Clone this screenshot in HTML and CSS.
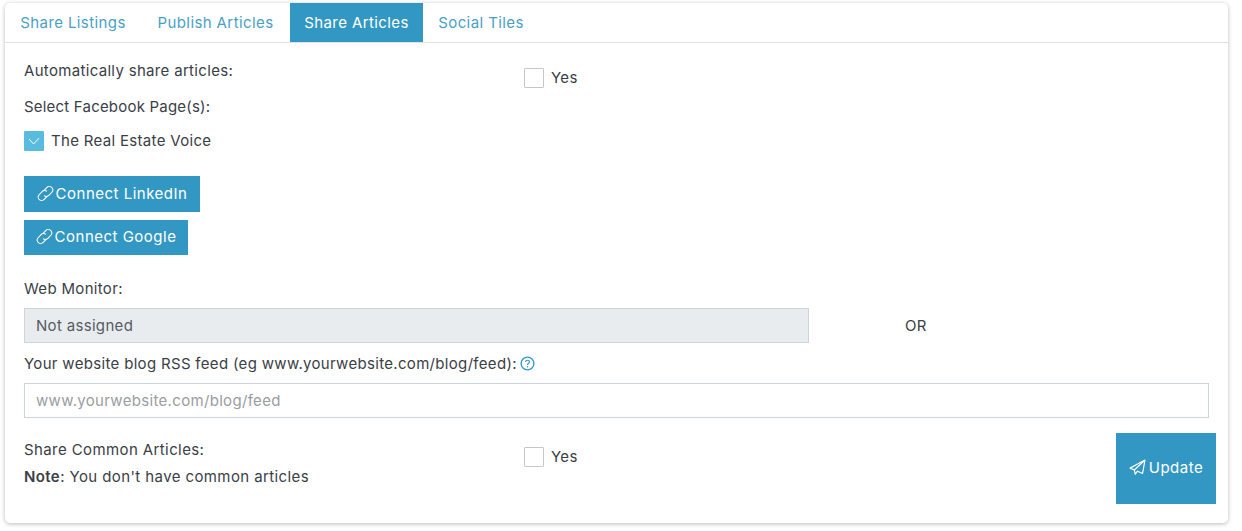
FILE: index.html
```html
<!DOCTYPE html>
<html lang="en">
<head>
<meta charset="utf-8">
<title>Share Articles</title>
<link rel="stylesheet" href="styles.css">
</head>
<body>
<main class="card">
  <nav class="tabs">
    <a class="tab tab-a">Share Listings</a>
    <a class="tab tab-b">Publish Articles</a>
    <a class="tab tab-c active">Share Articles</a>
    <a class="tab tab-d">Social Tiles</a>
  </nav>
  <div class="content">
    <div class="row-auto">
      <span class="label col-left">Automatically share articles:</span>
      <label class="check-line"><span class="box"></span>Yes</label>
    </div>
    <div class="label fb-label">Select Facebook Page(s):</div>
    <label class="check-line fb-check">
      <span class="box checked">
        <svg width="12" height="12" viewBox="0 0 12 12"><path d="M1 4 L5.6 9 L11 3.2" fill="none" stroke="#fff" stroke-width="1"/></svg>
      </span>The Real Estate Voice
    </label>
    <div class="btn-stack">
      <button class="btn btn-li">
        <svg class="link-ic" width="17" height="17" viewBox="0 0 16 16" fill="none" stroke="#fff" stroke-width="1"><path d="M6.2 5.6 L9.2 2.4 C10.3 1.2 12.4 1 13.8 2.2 C15.2 3.4 15.3 5.4 14.2 6.6 L11.2 9.8 C10.1 11 8 11.1 6.7 9.9"/><path d="M9.8 10.4 L6.8 13.6 C5.7 14.8 3.6 15 2.2 13.8 C0.8 12.6 0.7 10.6 1.8 9.4 L4.8 6.2 C5.9 5 8 4.9 9.3 6.1"/></svg>Connect LinkedIn
      </button>
      <button class="btn btn-go">
        <svg class="link-ic" width="17" height="17" viewBox="0 0 16 16" fill="none" stroke="#fff" stroke-width="1"><path d="M6.2 5.6 L9.2 2.4 C10.3 1.2 12.4 1 13.8 2.2 C15.2 3.4 15.3 5.4 14.2 6.6 L11.2 9.8 C10.1 11 8 11.1 6.7 9.9"/><path d="M9.8 10.4 L6.8 13.6 C5.7 14.8 3.6 15 2.2 13.8 C0.8 12.6 0.7 10.6 1.8 9.4 L4.8 6.2 C5.9 5 8 4.9 9.3 6.1"/></svg>Connect Google
      </button>
    </div>
    <div class="label wm-label">Web Monitor:</div>
    <div class="wm-row">
      <div class="select-box">Not assigned</div>
      <span class="or">OR</span>
    </div>
    <div class="label rss-label">Your website blog RSS feed (eg www.yourwebsite.com/blog/feed):
      <svg class="help" width="15" height="15" viewBox="0 0 15 15"><circle cx="7.5" cy="7.5" r="6.4" fill="none" stroke="#3397c3" stroke-width="1.3"/><path d="M5.6 6 C5.6 3.6 9.5 3.7 9.5 5.9 C9.5 7.3 7.5 7.3 7.5 8.9" fill="none" stroke="#3397c3" stroke-width="1.2"/><circle cx="7.5" cy="10.8" r=".8" fill="#3397c3"/></svg>
    </div>
    <div class="text-input">www.yourwebsite.com/blog/feed</div>
    <div class="bottom-row">
      <div class="col-left">
        <div class="label">Share Common Articles:</div>
        <div class="label note"><b>Note</b>: You don't have common articles</div>
      </div>
      <label class="check-line common-check"><span class="box"></span>Yes</label>
      <button class="btn update">
        <svg class="plane" width="17" height="17" viewBox="0 0 16 16" fill="none" stroke="#fff" stroke-width="1.1" stroke-linejoin="round"><path d="M15 1 L1 8.6 L5 10.4 L15 1 L12.8 13.6 L8 11.5 L5.9 14.3 L5 10.4"/></svg>Update
      </button>
    </div>
  </div>
</main>
</body>
</html>
```
FILE: styles.css
```css
* { box-sizing: border-box; }
html, body { margin: 0; background: #fff; }
body {
  padding: 3px 14px 8px 5px;
  font-family: Inter, "Liberation Sans", sans-serif;
  font-size: 15px;
  letter-spacing: 0.32px;
  color: #3a3e45;
}
.card {
  height: 520px;
  border-radius: 5px;
  background: #fff;
  box-shadow: 0 1px 4px rgba(0, 0, 0, 0.28);
}
.tabs {
  display: flex;
  height: 40px;
  border-bottom: 1px solid #dee2e6;
}
.tab {
  display: flex;
  align-items: center;
  height: 39px;
  color: #4a9fc7;
  letter-spacing: 0.4px;
  white-space: nowrap;
  justify-content: center;
}
.tab-a { width: 136px; }
.tab-b { width: 149px; }
.tab-c { width: 133px; }
.tab-d { width: 116px; }
.tab.active { background: #3397c3; color: #fff; }
.content { padding: 0 19px; }
.col-left { width: 500px; flex: none; }
.label { line-height: 20px; white-space: nowrap; }
.row-auto { display: flex; height: 35px; padding-top: 18px; }
.row-auto .check-line { margin-top: 7px; }
.check-line { display: flex; align-items: center; height: 20px; line-height: 20px; }
.box {
  display: flex;
  align-items: center;
  justify-content: center;
  width: 20px;
  height: 20px;
  margin-right: 7px;
  border: 1px solid #c4c7cb;
  border-radius: 1px;
  background: #fff;
  flex: none;
}
.box.checked { background: #59bbdd; border-color: #59bbdd; }
.fb-label { margin-top: 19px; letter-spacing: 0.2px; }
.fb-check { margin-top: 14px; }
.btn-stack {
  display: flex;
  flex-direction: column;
  align-items: flex-start;
  gap: 8px;
  margin-top: 25px;
}
.btn {
  display: flex;
  align-items: center;
  justify-content: center;
  border: 0;
  background: #3397c3;
  color: #fff;
  font: inherit;
  letter-spacing: 0.5px;
  padding: 0 0 2px;
}
.btn-li { width: 176px; height: 36px; }
.btn-go { width: 164px; height: 35px; }
.link-ic { margin-right: 2px; }
.wm-label { margin-top: 24px; }
.wm-row { display: flex; align-items: center; margin-top: 9px; }
.select-box {
  width: 785px;
  height: 35px;
  padding-left: 11px;
  line-height: 33px;
  background: #e9ecef;
  border: 1px solid #ced4da;
  color: #555b62;
}
.or { margin-left: 96px; }
.rss-label { margin-top: 11px; }
.help { vertical-align: -2px; margin-left: -1px; }
.text-input {
  height: 35px;
  margin-top: 9px;
  padding-left: 11px;
  line-height: 33px;
  border: 1px solid #ced4da;
  color: #9a9da1;
}
.bottom-row { display: flex; height: 90px; margin-top: 15px; }
.bottom-row .col-left { padding-top: 7px; }
.bottom-row .label { letter-spacing: 0.4px; }
.note { margin-top: 7px; }
.note b { font-weight: 600; }
.common-check { margin-top: 14px; align-self: flex-start; }
.update { width: 100px; height: 71px; margin-left: auto; margin-right: -7px; }
.plane { margin-right: 3px; }
```
